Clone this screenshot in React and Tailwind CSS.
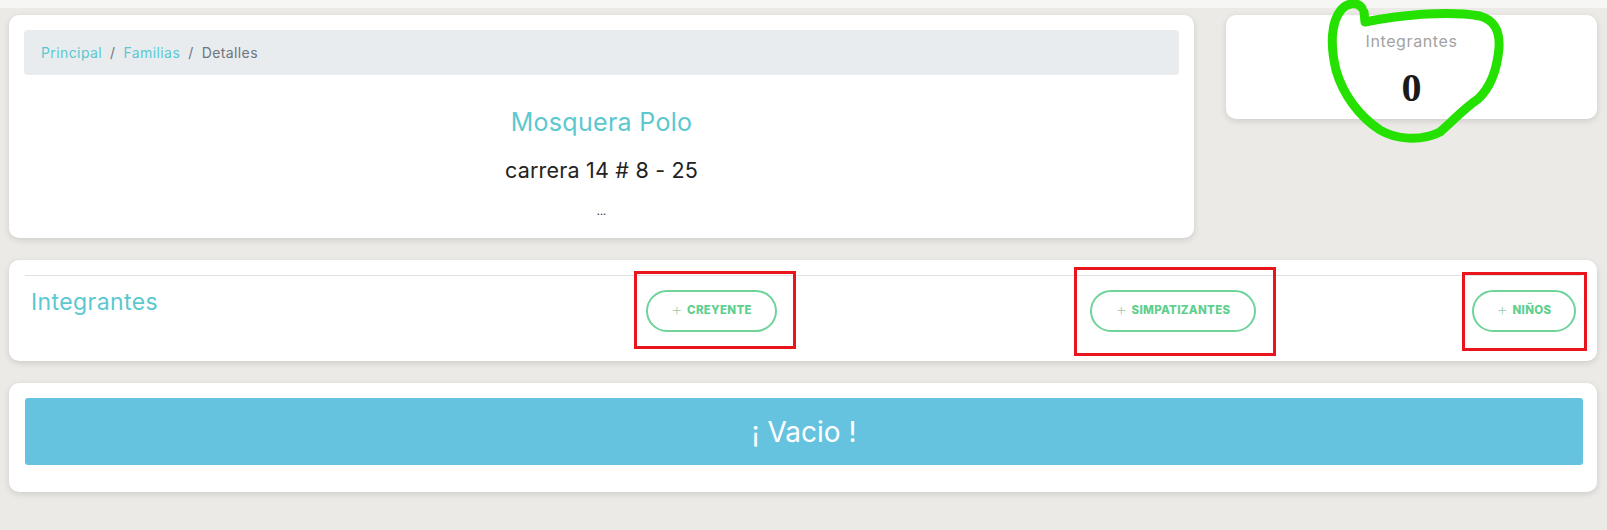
import React from 'react';

const FONT = "font-['Inter','Open_Sans',sans-serif]";

function AddButton({ label, className }) {
  return (
    <button
      className={`h-[42px] rounded-full border-2 border-[#6fd39a] bg-white flex items-center justify-center gap-[4px] text-[11.5px] font-extrabold tracking-[0.3px] text-[#5fcf8e] ${className}`}
    >
      <span className="text-[18px] font-extralight text-[#9bc9a8] leading-none -mt-[2px]">+</span>
      {label}
    </button>
  );
}

function Card({ className, children }) {
  return (
    <div className={`bg-white rounded-[10px] shadow-[0_2px_6px_rgba(0,0,0,0.13)] ${className}`}>
      {children}
    </div>
  );
}

export default function App() {
  return (
    <div className={`relative min-h-[530px] bg-[#ebeae6] ${FONT}`}>
      <div className="h-[8px] bg-[#f6f6f4]" />

      <div className="flex pl-[9px] pt-[7px] gap-[32px]">
        <Card className="w-[1185px] h-[223px] px-[15px] pt-[15px]">
          <div className="h-[45px] rounded-[4px] bg-[#e9ecef] flex items-center px-[17px] text-[14px] tracking-[0.4px]">
            <span className="text-[#5bc8d0]">Principal</span>
            <span className="px-[8px] text-[#6c757d]">/</span>
            <span className="text-[#5bc8d0]">Familias</span>
            <span className="px-[8px] text-[#6c757d]">/</span>
            <span className="text-[#6c757d]">Detalles</span>
          </div>
          <div className="flex flex-col items-center">
            <div className="mt-[31px] text-[25px] tracking-[0.3px] text-[#5bc8d0] leading-[32px]">Mosquera Polo</div>
            <div className="mt-[18px] text-[21.5px] tracking-[0.2px] text-[#222] leading-[28px]">carrera 14 # 8 - 25</div>
            <div className="mt-[20px] text-[11px] text-[#333] leading-[14px]">...</div>
          </div>
        </Card>

        <Card className="w-[371px] h-[104px] flex flex-col items-center">
          <div className="mt-[16px] text-[16px] tracking-[0.6px] text-[#a3a3a3] leading-[20px]">Integrantes</div>
          <div className="mt-[17px] font-['Liberation_Serif',serif] font-bold text-[40px] leading-[40px] text-[#1a1a1a]">
            0
          </div>
        </Card>
      </div>

      <Card className="ml-[9px] mr-[10px] mt-[22px] h-[101px] px-[16px] pt-[15px]">
        <div className="border-t border-[#dee2e6]" />
        <div className="flex items-start">
          <div className="pl-[6px] pt-[11px] text-[23px] tracking-[0.4px] leading-[30px] text-[#5bc8d0] w-[621px]">Integrantes</div>
          <AddButton label="CREYENTE" className="mt-[14px] w-[131px]" />
          <AddButton label="SIMPATIZANTES" className="mt-[14px] ml-[313px] w-[166px]" />
          <AddButton label="NIÑOS" className="mt-[14px] ml-[216px] w-[104px]" />
        </div>
      </Card>

      <Card className="ml-[9px] mr-[10px] mt-[22px] h-[109px] pl-[16px] pr-[14px] pt-[15px]">
        <div className="h-[67px] rounded-[3px] bg-[#66c3df] flex items-center justify-center text-white text-[28px]">
          ¡ Vacio !
        </div>
      </Card>

      {/* annotations */}
      <div className="absolute left-[634px] top-[271px] w-[162px] h-[78px] border-[3px] border-[#e8151d]" />
      <div className="absolute left-[1074px] top-[267px] w-[202px] h-[89px] border-[3px] border-[#e8151d]" />
      <div className="absolute left-[1462px] top-[272px] w-[125px] h-[79px] border-[3px] border-[#e8151d]" />
      <svg className="absolute left-0 top-0 pointer-events-none" width="1607" height="530">
        <path
          d="M1362 8 C1358 2 1348 2 1341 10 C1331 22 1330 45 1336 70 C1343 95 1360 117 1380 130 C1395 139 1420 142 1440 132 C1452 122 1462 110 1478 99 C1490 88 1497 70 1499 48 C1500 30 1494 20 1480 16 C1455 12 1420 14 1395 17 C1380 19 1370 21 1365 22 L1364 12"
          fill="none"
          stroke="#24e100"
          strokeWidth="9"
          strokeLinecap="round"
          strokeLinejoin="round"
        />
      </svg>
    </div>
  );
}
